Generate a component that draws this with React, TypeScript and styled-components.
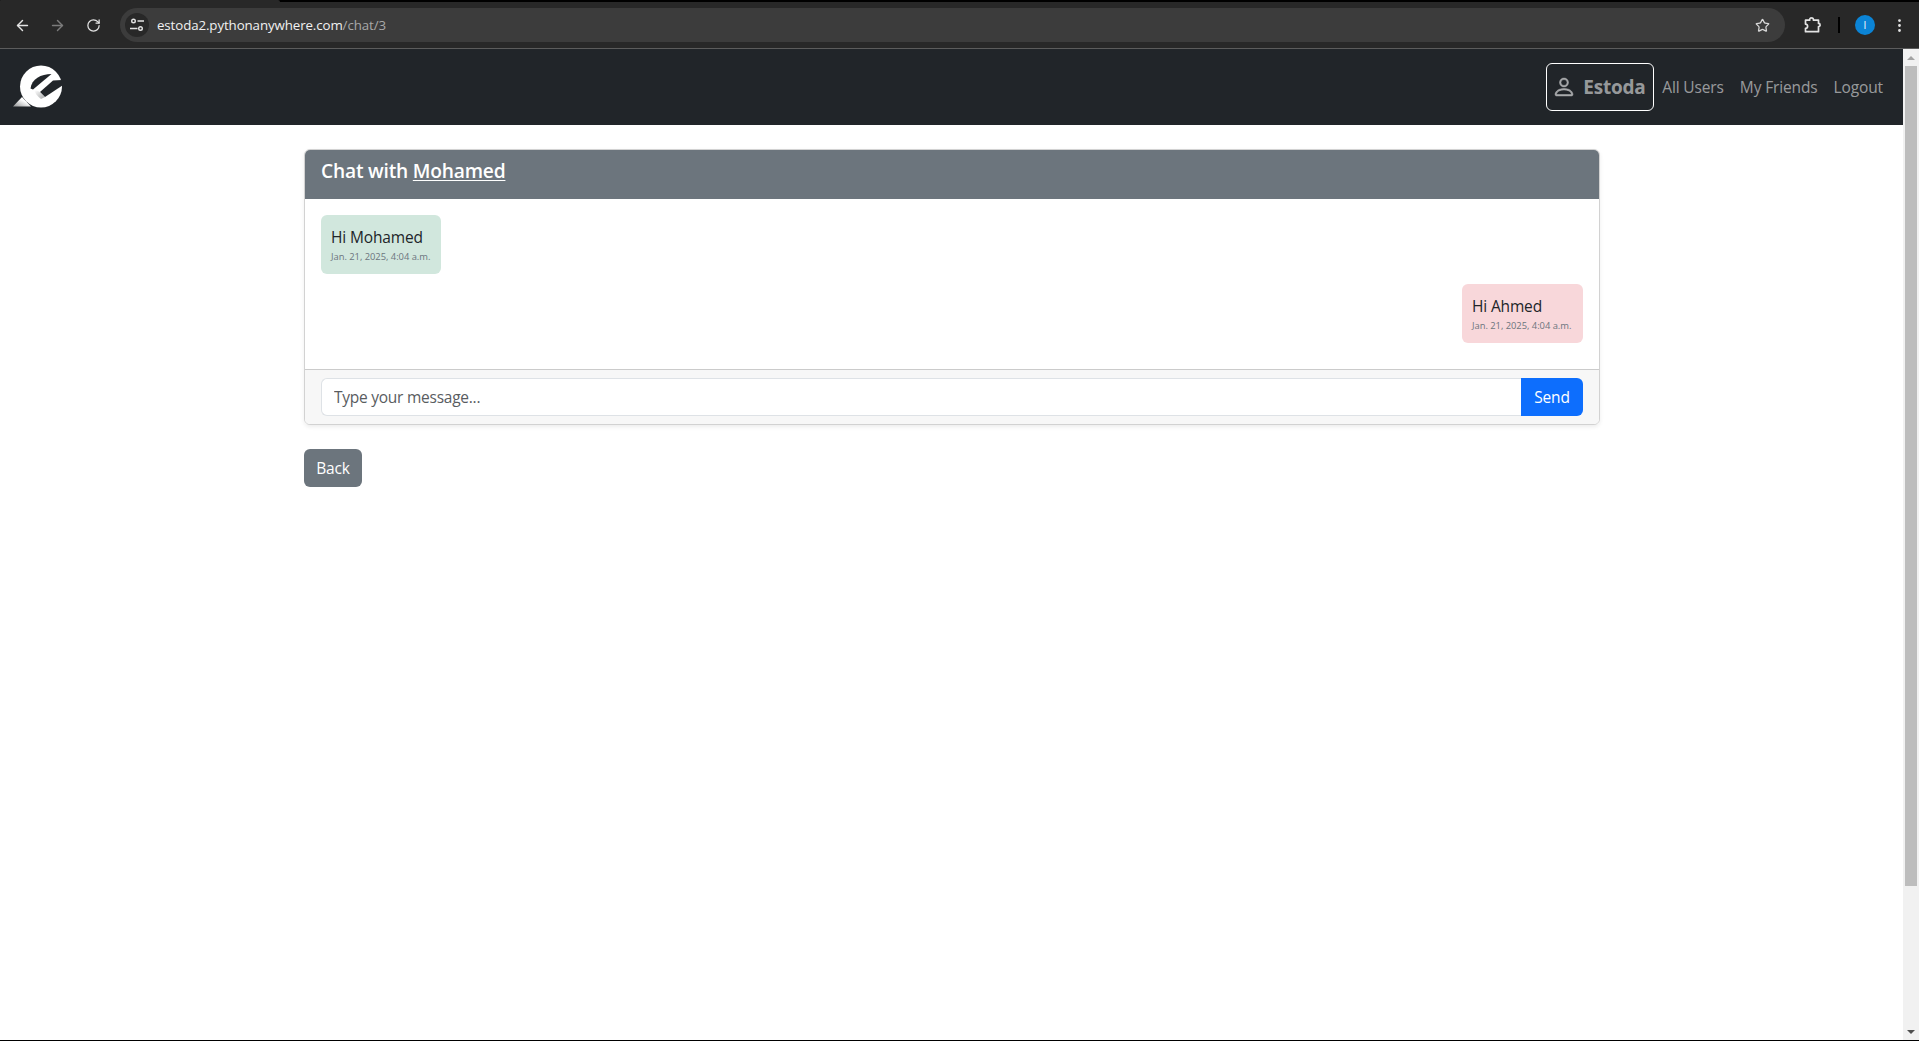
import React from 'react';
import styled, { createGlobalStyle } from 'styled-components';
import { ArrowLeft, ArrowRight, RotateCw, Star, EllipsisVertical } from 'lucide-react';

const FONT = `"Open Sans", "Noto Sans", sans-serif`;

const Global = createGlobalStyle`
  html, body { margin: 0; padding: 0; height: 100%; overflow: hidden; background: #fff; }
  body { font-family: ${FONT}; font-size: 15.5px; color: #212529; }
  * { box-sizing: border-box; }
`;

const Win = styled.div`
  height: 1041px; display: flex; flex-direction: column; border-bottom: 1px solid #000; overflow: hidden;
`;
const TopStrip = styled.div`height: 2px; background: #000; flex: none;`;
const TabEdge = styled.div`width: 280px; height: 2px; background: #282828; border-radius: 2px 6px 0 0;`;
const Toolbar = styled.div`
  height: 47px; flex: none; background: #282828; border-bottom: 1px solid #5c5c5c;
  display: flex; align-items: center;
`;
const ToolIcon = styled.span<{ $w: number; $dim?: boolean }>`
  width: ${p => p.$w}px; flex: none; display: flex; justify-content: center; align-items: center;
  color: ${p => (p.$dim ? '#7b7b7b' : '#e3e3e3')};
`;
const Omnibox = styled.div`
  width: 1665px; height: 34px; margin-left: 5px; flex: none; border-radius: 17px; background: #3c3c3c;
  display: flex; align-items: center; padding: 0 15px 0 5px;
`;
const SiteChip = styled.span`
  width: 24px; height: 24px; border-radius: 50%; background: #282828; color: #e3e3e3; flex: none;
  display: flex; align-items: center; justify-content: center;
`;
const Url = styled.span`
  margin-left: 8px; flex: 1; font-size: 13.3px; color: #f1f1f1; letter-spacing: -0.1px; white-space: nowrap;
  span { color: #a8a8a8; }
`;
const Divider = styled.span`width: 2px; height: 16px; background: #000; flex: none; margin: 0 15px 0 0;`;
const Avatar = styled.span`
  width: 20px; height: 20px; border-radius: 50%; background: #0b84d6; color: #fff; flex: none;
  font-size: 10px; display: flex; align-items: center; justify-content: center;
`;

const Viewport = styled.div`flex: 1; min-height: 0; display: flex;`;
const Page = styled.div`flex: 1; min-width: 0; display: flex; flex-direction: column;`;

const Navbar = styled.nav`
  height: 76px; flex: none; background: #212529; display: flex; align-items: center;
  justify-content: space-between; padding: 0 20px 0 12px;
`;
const Links = styled.div`display: flex; align-items: center;`;
const ProfileLink = styled.a`
  display: flex; align-items: center; gap: 7px; height: 48px; width: 108px; padding-left: 5px;
  border: 1px solid #fff; border-radius: 6px; color: rgba(255, 255, 255, 0.55);
  font-weight: 700; font-size: 19px; letter-spacing: -0.2px;
  svg { stroke: currentColor; stroke-width: 0.35; }
`;
const NavLink = styled.a<{ $ml: number }>`
  margin-left: ${p => p.$ml}px; color: rgba(255, 255, 255, 0.55); font-size: 15.5px; letter-spacing: -0.13px; white-space: nowrap;
`;

const Container = styled.main`width: 1296px; margin: 24px 0 0 304px;`;
const Card = styled.section`
  border: 1px solid rgba(0, 0, 0, 0.175); border-radius: 6px; box-shadow: 0 2px 4px rgba(0, 0, 0, 0.075);
  overflow: hidden;
`;
const CardHeader = styled.header`
  height: 49px; background: #6c757d; color: #fff; padding: 9px 16px 0;
`;
const Title = styled.h5`
  margin: 0; font-size: 19.2px; line-height: 24px; font-weight: 600; letter-spacing: -0.2px;
  a { color: #fff; text-decoration: underline; text-underline-offset: 2px; }
`;
const Messages = styled.div`display: flex; flex-direction: column; padding: 16px;`;
const Bubble = styled.div<{ $mine?: boolean }>`
  align-self: ${p => (p.$mine ? 'flex-end' : 'flex-start')};
  width: ${p => (p.$mine ? 121 : 120)}px; height: 59px; margin-bottom: 10px; padding: 11px 9px 0 10px;
  border-radius: 6px; background: ${p => (p.$mine ? '#f8d7da' : '#d1e7dd')};
`;
const MsgText = styled.div`font-size: 15.5px; line-height: 22px; letter-spacing: -0.15px; white-space: nowrap;`;
const Stamp = styled.div`font-size: 9.4px; line-height: 18px; color: #6c757d; white-space: nowrap; letter-spacing: -0.03px;`;
const CardFooter = styled.form`
  height: 55px; background: #f7f7f7; border-top: 1px solid rgba(0, 0, 0, 0.175); padding: 8px 16px 0; display: flex;
`;
const Input = styled.input`
  flex: 1; height: 38px; min-width: 0; border: 1px solid #dee2e6; border-right: 0; border-radius: 6px 0 0 6px;
  padding: 0 12px; font-family: ${FONT}; font-size: 15.5px; letter-spacing: -0.25px; background: #fff; outline: none;
  &::placeholder { color: #595c5f; opacity: 1; }
`;
const SendBtn = styled.button`
  width: 62px; height: 38px; border: 0; border-radius: 0 6px 6px 0; background: #0d6efd; color: #fff;
  font-family: ${FONT}; font-size: 15.5px; letter-spacing: -0.2px; padding: 0;
`;
const BackBtn = styled.a`
  display: flex; width: 58px; height: 38px; margin-top: 24px; align-items: center; justify-content: center;
  background: #6c757d; color: #fff; border-radius: 6px; font-size: 15.5px; letter-spacing: -0.2px;
`;

const Scrollbar = styled.aside`
  width: 16px; flex: none; background: #f1f1f1; display: flex; flex-direction: column; align-items: center;
`;
const Arrow = styled.span<{ $down?: boolean }>`
  height: 17px; flex: none; display: flex; align-items: center; justify-content: center;
  &::before {
    content: ''; border-left: 4px solid transparent; border-right: 4px solid transparent;
    ${p => (p.$down ? 'border-top: 4px solid #505050;' : 'border-bottom: 4px solid #a3a3a3;')}
  }
`;
const Track = styled.div`flex: 1; align-self: stretch; padding: 0 2px;`;
const Thumb = styled.div`height: 820px; background: #bdbdbd;`;

const TuneIcon = () => (
  <svg width="16" height="16" viewBox="0 0 16 16" fill="none" stroke="currentColor" strokeWidth="1.4">
    <circle cx="4.5" cy="4" r="1.8" />
    <path d="M8.5 4H15M1 11.5h7.5" />
    <circle cx="11.5" cy="11.5" r="1.8" />
  </svg>
);

const ExtensionIcon = () => (
  <svg width="18" height="18" viewBox="0 0 18 18" fill="none" stroke="currentColor" strokeWidth="1.7" strokeLinejoin="round">
    <path d="M2 16V12.6a2 2 0 0 0 0-4.2V4.5h4.2a1.9 1.9 0 0 1 1.9-2.4c1.3 0 2 1.1 1.8 2.4H15v3.2a1.6 1.6 0 0 1 0 3.2V16Z" transform="translate(0.5 -0.3)" />
  </svg>
);

const PersonIcon = () => (
  <svg width="24" height="24" viewBox="0 0 16 16" fill="currentColor">
    <path d="M8 8a3 3 0 1 0 0-6 3 3 0 0 0 0 6m2-3a2 2 0 1 1-4 0 2 2 0 0 1 4 0m4 8c0 1-1 1-1 1H3s-1 0-1-1 1-4 6-4 6 3 6 4m-1-.004c-.001-.246-.154-.986-.832-1.664C11.516 10.68 10.289 10 8 10s-3.516.68-4.168 1.332c-.678.678-.83 1.418-.832 1.664z" />
  </svg>
);

const Logo = () => (
  <svg width="50" height="44" viewBox="0 0 50 44">
    <defs>
      <linearGradient id="lg1" x1="0" y1="1" x2="1" y2="0">
        <stop offset="0" stopColor="#8d8f90" />
        <stop offset="0.6" stopColor="#fff" />
      </linearGradient>
      <linearGradient id="lg2" x1="0.1" y1="0.1" x2="0.9" y2="0.9">
        <stop offset="0" stopColor="#fff" />
        <stop offset="1" stopColor="#77797a" />
      </linearGradient>
    </defs>
    <path d="M1 41.5 L10 32 L19 41.5 Z" fill="url(#lg1)" />
    <circle cx="29" cy="21.5" r="21" fill="#fff" />
    <path d="M39.5 9 C29 9 19.5 14 18.5 23.5 L21 24.5 Z" fill="#212529" />
    <path d="M51 15 L41 15.5 L28 27 L33 32 L51 20 Z" fill="#212529" />
    <path d="M22 24.5 L28 27 L33 32 L29 34 C25 31 23 28 22 24.5 Z" fill="url(#lg2)" opacity="0.6" />
  </svg>
);

export default function App() {
  return (
    <Win>
      <Global />
      <TopStrip><TabEdge /></TopStrip>
      <Toolbar>
        <ToolIcon $w={44}><ArrowLeft size={17} /></ToolIcon>
        <ToolIcon $w={27} $dim><ArrowRight size={17} /></ToolIcon>
        <ToolIcon $w={44}><RotateCw size={15} /></ToolIcon>
        <Omnibox>
          <SiteChip><TuneIcon /></SiteChip>
          <Url>estoda2.pythonanywhere.com<span>/chat/3</span></Url>
          <Star size={15} color="#d8d8d8" />
        </Omnibox>
        <ToolIcon $w={53}><ExtensionIcon /></ToolIcon>
        <Divider />
        <Avatar>I</Avatar>
        <ToolIcon $w={48}><EllipsisVertical size={17} /></ToolIcon>
      </Toolbar>
      <Viewport>
        <Page>
          <Navbar>
            <Logo />
            <Links>
              <ProfileLink><PersonIcon /> Estoda</ProfileLink>
              <NavLink $ml={8}>All Users</NavLink>
              <NavLink $ml={16}>My Friends</NavLink>
              <NavLink $ml={16}>Logout</NavLink>
            </Links>
          </Navbar>
          <Container>
            <Card>
              <CardHeader>
                <Title>Chat with <a>Mohamed</a></Title>
              </CardHeader>
              <Messages>
                <Bubble>
                  <MsgText>Hi Mohamed</MsgText>
                  <Stamp>Jan. 21, 2025, 4:04 a.m.</Stamp>
                </Bubble>
                <Bubble $mine>
                  <MsgText>Hi Ahmed</MsgText>
                  <Stamp>Jan. 21, 2025, 4:04 a.m.</Stamp>
                </Bubble>
              </Messages>
              <CardFooter>
                <Input placeholder="Type your message..." />
                <SendBtn type="button">Send</SendBtn>
              </CardFooter>
            </Card>
            <BackBtn>Back</BackBtn>
          </Container>
        </Page>
        <Scrollbar>
          <Arrow />
          <Track><Thumb /></Track>
          <Arrow $down />
        </Scrollbar>
      </Viewport>
    </Win>
  );
}
